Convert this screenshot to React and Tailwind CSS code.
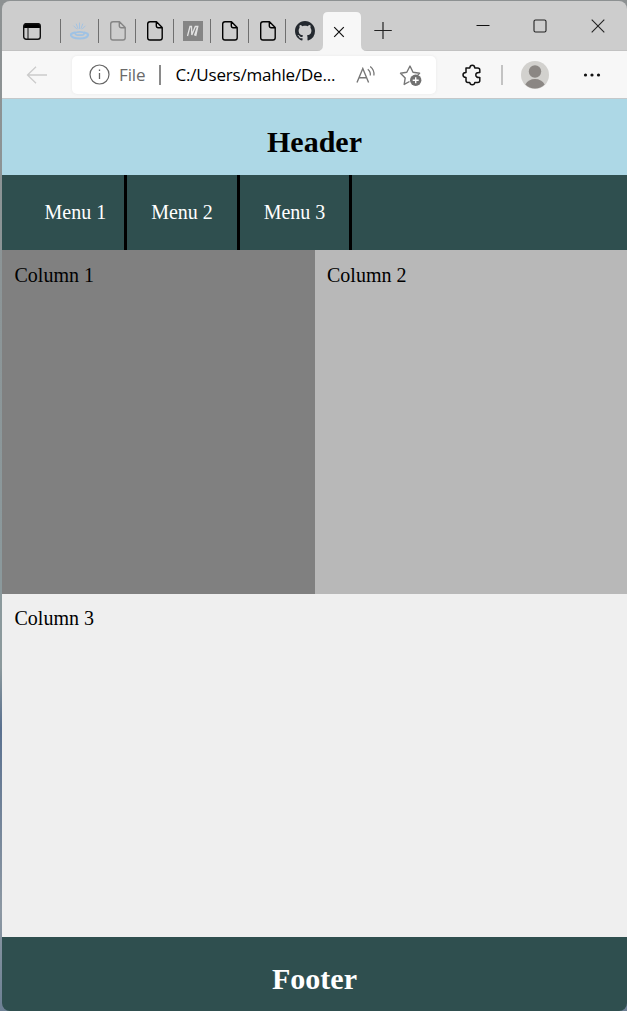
import React from "react";

function Svg({ w, h, className = "", children }) {
  return (
    <svg width={w} height={h} viewBox={`0 0 ${w} ${h}`} fill="none" className={`block shrink-0 ${className}`}>
      {children}
    </svg>
  );
}

function Tab({ children }) {
  return (
    <div className="flex h-6 w-[37.5px] shrink-0 items-center border-l border-[#6f6f6f] pl-[9px]">{children}</div>
  );
}

function PageIcon({ className }) {
  return (
    <Svg w={20} h={20} className={className}>
      <path
        d="M5 .8h6.500l5.700 5.700v10.200q0 2.300-2.300 2.300h-9.900q-2.300 0-2.300-2.300v-13.600q0-2.300 2.300-2.300zM11.300 .8v4q0 1.900 1.900 1.900h4"
        stroke="currentColor"
        strokeWidth="1.4"
        strokeLinejoin="round"
      />
    </Svg>
  );
}

function JavaIcon() {
  return (
    <Svg w={20} h={20}>
      <g stroke="#9fc2e4" strokeLinecap="round">
        <path d="M9.500 2v5.500M6.300 3l1.700 4.500M12.700 3L11 7.500M3.800 5l3 3M15.200 5l-3 3" strokeWidth="0.9" />
        <path d="M5 11.500Q.5 12.500 1 14.300 2 17.300 9.500 17.500T18 14.300Q18.500 12.500 14.500 11.500" strokeWidth="2.200" />
        <ellipse cx="9.700" cy="12.500" rx="4.500" ry="1.700" strokeWidth="1.700" />
      </g>
    </Svg>
  );
}

function GithubMark() {
  return (
    <svg width="20" height="20" viewBox="0 0 16 16" fill="#24292f" className="block shrink-0">
      <path d="M8 0C3.58 0 0 3.58 0 8c0 3.54 2.29 6.53 5.47 7.59.4.07.55-.17.55-.38 0-.19-.01-.82-.01-1.49-2.01.37-2.53-.49-2.69-.94-.09-.23-.48-.94-.82-1.13-.28-.15-.68-.52-.01-.53.63-.01 1.08.58 1.23.82.72 1.21 1.87.87 2.33.66.07-.52.28-.87.51-1.07-1.78-.2-3.64-.89-3.64-3.95 0-.87.31-1.59.82-2.15-.08-.2-.36-1.02.08-2.12 0 0 .67-.21 2.2.82.64-.18 1.32-.27 2-.27.68 0 1.36.09 2 .27 1.53-1.04 2.2-.82 2.2-.82.44 1.1.16 1.92.08 2.12.51.56.82 1.27.82 2.15 0 3.07-1.87 3.75-3.65 3.95.29.25.54.73.54 1.48 0 1.07-.01 1.93-.01 2.2 0 .21.15.46.55.38A8.013 8.013 0 0016 8c0-4.42-3.58-8-8-8z" />
    </svg>
  );
}

function TabStrip() {
  return (
    <div className="flex h-[50px] items-start bg-[#cdcdcd] shadow-[inset_0_-1px_0_#c2c2c2]">
      <div className="flex h-[50px] w-[58px] shrink-0 items-start pt-[21px] pl-[20px]">
        <Svg w={20} h={20}>
          <path d="M2 6V3.500Q2 1 4.500 1h11Q18 1 18 3.500V6z" fill="#000" />
          <rect x="1.700" y="1.700" width="16.600" height="15.600" rx="2.500" stroke="#111" strokeWidth="1.400" />
          <path d="M6 5v12" stroke="#111" />
        </Svg>
      </div>
      <div className="flex pt-[18px]">
        <Tab><JavaIcon /></Tab>
        <Tab><PageIcon className="text-[#858585]" /></Tab>
        <Tab><PageIcon className="text-black" /></Tab>
        <Tab>
          <Svg w={20} h={20}>
            <path d="M0 0h20v20H0z" fill="#858585" />
            <path d="M4.500 15L7 5.500h1.500L8.800 14 12.300 5.500h2.500L12.700 15M11.500 14.500L14.500 6" stroke="#e2e2e2" strokeWidth="1.300" />
          </Svg>
        </Tab>
        <Tab><PageIcon className="text-black" /></Tab>
        <Tab><PageIcon className="text-black" /></Tab>
        <Tab><GithubMark /></Tab>
      </div>
      <Svg w={50} h={40} className="-ml-[5.500px] mt-[10px]">
        <path d="M0 40q6 0 6-6V6Q6 1 11 1h28q5 0 5 5V34q0 6 6 6z" fill="#f7f7f7" />
        <path d="M17.200 16.200l9.600 9.600M26.800 16.200l-9.600 9.600" stroke="#111" strokeWidth="1.200" />
      </Svg>
      <Svg w={18} h={18} className="ml-[7px] mt-[20px]">
        <path d="M9 1v17M.3 9.500h17.500" stroke="#222" strokeWidth="1.200" />
      </Svg>
      <Svg w={14} h={14} className="ml-[83.500px] mt-[17px]">
        <path d="M.5 7.500h13" stroke="#111" />
      </Svg>
      <Svg w={14} h={14} className="ml-[43px] mt-[18px]">
        <rect x="1" y="1" width="12" height="12" rx="1.500" stroke="#222" strokeWidth="1.100" />
      </Svg>
      <Svg w={14} h={14} className="ml-[44px] mt-[18px]">
        <path d="M.7 .7l12.600 12.600M13.300 .7L.7 13.300" stroke="#222" strokeWidth="1.100" />
      </Svg>
    </div>
  );
}

function Toolbar() {
  return (
    <div className="flex h-12 items-center border-b border-[#c4c8ca] bg-[#f7f7f7] font-['Open_Sans',sans-serif]">
      <Svg w={22} h={18} className="ml-[24px]">
        <path d="M21 9H1.500M10 .8L1.500 9l8.500 8.200" stroke="#cbcbcb" strokeWidth="1.300" />
      </Svg>
      <div className="ml-[24px] flex h-[38px] w-[364px] shrink-0 items-center rounded-[5px] bg-white pl-[17px] shadow-[0_0_3px_#e8e8e8]">
        <Svg w={21} h={21}>
          <circle cx="10.500" cy="10.500" r="9.500" stroke="#666" strokeWidth="1.200" />
          <path d="M10.500 9v6M10.500 5.500v1.500" stroke="#666" strokeWidth="1.300" />
        </Svg>
        <span className="ml-[9px] w-[29px] whitespace-nowrap text-[17px] leading-none tracking-[-0.1px] text-[#6a6a6a]">File</span>
        <span className="ml-[11px] h-5 w-[1.500px] bg-[#8a8a8a]" />
        <span className="ml-[15px] w-[160px] whitespace-nowrap text-[17px] leading-none tracking-[-0.2px] text-black">C:/Users/mahle/De...</span>
        <Svg w={20} h={20} className="ml-[20px]">
          <path d="M1 17.500L6.800 3.500 12.600 17.500M3 12.700h7.600" stroke="#777" strokeWidth="1.400" />
          <path d="M11.800 4.200q3 2.300 2.500 6.300M14.200 1.500q4.500 3.700 3.700 9" stroke="#777" strokeWidth="1.300" />
        </Svg>
        <Svg w={24} h={24} className="ml-[23px] mt-[2px]">
          <path
            d="M10.500 17.500l-5.300 2.900 1-6.500L1.500 9.200l6.300-.9L11 2l3 6.300 6.600.9-1.800 1.700"
            stroke="#777"
            strokeWidth="1.400"
            strokeLinejoin="round"
          />
          <circle cx="16.700" cy="16.300" r="5.700" fill="#717171" />
          <path d="M16.700 13.300v6M13.700 16.300h6" stroke="#fff" strokeWidth="1.400" />
        </Svg>
      </div>
      <Svg w={20} h={22} className="ml-[26px]">
        <path
          d="M4 4h3.800Q8 1.300 10.300 1.300T12.800 4H15.500Q17.800 4 17.800 6V8.600Q13.800 8.200 13.800 11t4 2.400V16.500q0 2-2 2h-3q-.2 2.300-2.500 2.300T7.800 18.500H6q-2 0-2-2V13.400Q1 13.300 1 11t3-2.400z"
          stroke="#111"
          strokeWidth="1.500"
          strokeLinejoin="round"
        />
      </Svg>
      <span className="ml-[19px] h-5 w-[2px] bg-[#c3c3c3]" />
      <Svg w={28} h={28} className="ml-[18px]">
        <circle cx="14" cy="14" r="14" fill="#d2d1ce" />
        <circle cx="14" cy="10.500" r="6.200" fill="#8b8784" />
        <path d="M4.300 23.500Q7.500 18 14 18t9.700 5.500A14 14 0 0 1 4.300 23.500z" fill="#8b8784" />
      </Svg>
      <Svg w={18} h={4} className="ml-[34px]">
        <circle cx="2.500" cy="2" r="1.600" fill="#111" />
        <circle cx="9" cy="2" r="1.600" fill="#111" />
        <circle cx="15.500" cy="2" r="1.600" fill="#111" />
      </Svg>
    </div>
  );
}

export default function App() {
  return (
    <div className="h-[1011px] w-[627px] overflow-hidden bg-[linear-gradient(#8d9192_0%,#8b999c_55%,#8b999c_66%,#5a7190_72%,#8c98a3_90%,#6d8094_100%)] pt-px pl-[2px]">
      <div className="flex h-[1010px] w-[625px] flex-col overflow-hidden rounded-[8px]">
        <TabStrip />
        <Toolbar />
        <div className="flex flex-col font-['Liberation_Serif',serif] text-[20px] leading-[23px] text-black">
          <header className="flex h-[76px] items-center justify-center bg-[#add8e6] pt-[10px]">
            <h2 className="text-[30px] leading-[34px] font-bold">Header</h2>
          </header>
          <nav className="flex h-[75px] bg-[#2f4f4f] pl-[18.500px] text-white">
            <a className="flex w-[106.500px] items-center border-r-[3px] border-black pl-6 whitespace-nowrap">Menu 1</a>
            <a className="flex w-[113px] items-center justify-center border-r-[3px] border-black whitespace-nowrap">Menu 2</a>
            <a className="flex w-[112px] items-center justify-center border-r-[3px] border-black whitespace-nowrap">Menu 3</a>
          </nav>
          <main className="flex flex-wrap">
            <section className="h-[344px] w-[313px] bg-[#808080] px-[12.500px] py-[14px]">Column 1</section>
            <section className="h-[344px] w-[312px] bg-[#b8b8b8] px-3 py-[14px]">Column 2</section>
            <section className="h-[343px] w-full bg-[#efefef] px-[12.500px] py-[13px]">Column 3</section>
          </main>
          <footer className="flex h-[74px] items-center justify-center bg-[#2f4f4f] pt-[10px] text-white">
            <h2 className="text-[30px] leading-[34px] font-bold">Footer</h2>
          </footer>
        </div>
      </div>
    </div>
  );
}
